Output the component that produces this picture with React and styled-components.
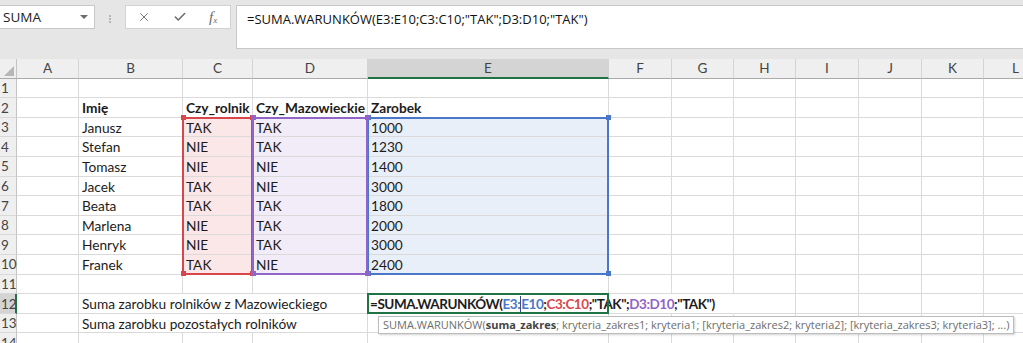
import React from 'react';
import styled, { createGlobalStyle } from 'styled-components';
import { X, Check } from 'lucide-react';

const COLS = ['A', 'B', 'C', 'D', 'E', 'F', 'G', 'H', 'I', 'J', 'K', 'L'];
const WIDTHS = [62, 104, 70, 115, 241, 63, 62, 62, 63, 63, 62, 64];
const ROW_HEADER = 17;
const HEAD_H = 19.7;
const ROW_H = 19.6;
const ROW_COUNT = 14;

const colLeft = (i) => ROW_HEADER + WIDTHS.slice(0, i).reduce((a, b) => a + b, 0);
const rowTop = (r) => HEAD_H + (r - 1) * ROW_H;

const RED = '#d8464b';
const PURPLE = '#9164c8';
const BLUE = '#4a78c8';
const GREEN = '#217346';

const TINTS = { C: '#fbe7e7', D: '#f1ecf7', E: '#e9eff9' };

const people = [
  ['Janusz', 'TAK', 'TAK', '1000'],
  ['Stefan', 'NIE', 'TAK', '1230'],
  ['Tomasz', 'NIE', 'NIE', '1400'],
  ['Jacek', 'TAK', 'NIE', '3000'],
  ['Beata', 'TAK', 'TAK', '1800'],
  ['Marlena', 'NIE', 'TAK', '2000'],
  ['Henryk', 'NIE', 'TAK', '3000'],
  ['Franek', 'TAK', 'NIE', '2400'],
];

const GlobalStyle = createGlobalStyle`
  html, body {
    margin: 0;
    padding: 0;
    background: #fff;
    overflow: hidden;
  }
`;

const Page = styled.div`
  width: 1023px;
  height: 343px;
  overflow: hidden;
  background: #fff;
`;

const FormulaBar = styled.div`
  display: flex;
  align-items: flex-start;
  height: 59px;
  box-sizing: border-box;
  padding-top: 5px;
  background: #e6e6e6;
  font-family: 'Open Sans', sans-serif;
`;

const NameBox = styled.div`
  width: 95px;
  height: 24px;
  box-sizing: border-box;
  display: flex;
  align-items: center;
  justify-content: space-between;
  padding: 0 6px 0 3px;
  background: #fff;
  border: 1px solid #c8c8c8;
  border-left: none;
  font-size: 13.5px;
  color: #222;
`;

const Caret = styled.span`
  width: 0;
  height: 0;
  border-left: 4px solid transparent;
  border-right: 4px solid transparent;
  border-top: 4px solid #6b6b6b;
`;

const Grip = styled.span`
  width: 2px;
  height: 2px;
  margin: 10px 14px 0 14px;
  background: #b4b4b4;
  box-shadow: 0 3px 0 #b4b4b4, 0 6px 0 #b4b4b4;
`;

const ActionBox = styled.div`
  width: 106px;
  height: 24px;
  box-sizing: border-box;
  display: flex;
  align-items: center;
  gap: 22px;
  padding-left: 11px;
  background: #fff;
  border: 1px solid #d2d2d2;
  color: #6b6b6b;
`;

const Fx = styled.span`
  font-family: 'Liberation Serif', serif;
  font-style: italic;
  font-size: 15px;
  color: #6b6b6b;
  line-height: 1;

  sub {
    font-size: 9px;
    vertical-align: -1px;
  }
`;

const FormulaInput = styled.div`
  flex: 1;
  height: 44px;
  margin-left: 5px;
  box-sizing: border-box;
  padding: 4px 10px;
  background: #fff;
  border: 1px solid #c8c8c8;
  border-right: none;
  font-size: 13px;
  line-height: 18px;
  color: #111;
  white-space: nowrap;
`;

const Sheet = styled.div`
  position: relative;
  display: grid;
  grid-template-columns: ${ROW_HEADER}px ${WIDTHS.map((w) => `${w}px`).join(' ')};
  grid-template-rows: ${HEAD_H}px;
  grid-auto-rows: ${ROW_H}px;
  font-family: Lato, 'Liberation Sans', sans-serif;
`;

const Corner = styled.div`
  position: relative;
  box-sizing: border-box;
  background: #efefef;
  border-right: 1px solid #c4c4c4;
  border-bottom: 1px solid #ababab;

  svg {
    position: absolute;
    right: 2px;
    bottom: 2px;
  }
`;

const ColHead = styled.div`
  box-sizing: border-box;
  display: flex;
  align-items: center;
  justify-content: center;
  background: ${(p) => (p.$active ? '#d4d4d4' : '#efefef')};
  border-right: 1px solid #d4d4d4;
  border-bottom: ${(p) => (p.$active ? `2px solid ${GREEN}` : '1px solid #ababab')};
  font-size: 13.5px;
  color: #444;
`;

const RowHead = styled.div`
  box-sizing: border-box;
  display: flex;
  align-items: center;
  padding-left: 1px;
  background: ${(p) => (p.$active ? '#d4d4d4' : '#efefef')};
  border-right: ${(p) => (p.$active ? `2px solid ${GREEN}` : '1px solid #c4c4c4')};
  border-bottom: 1px solid #d8d8d8;
  font-size: 13.5px;
  color: #444;
`;

const Cell = styled.div`
  grid-column: span ${(p) => p.$span || 1};
  box-sizing: border-box;
  padding: 1px 3px 0;
  background: ${(p) => p.$tint || '#fff'};
  border-right: 1px solid #dadada;
  border-bottom: 1px solid #dadada;
  font-size: 13.7px;
  font-weight: ${(p) => (p.$bold ? 700 : 400)};
  line-height: 18px;
  color: #1c1c1c;
  white-space: nowrap;
`;

const EditText = styled(Cell)`
  position: relative;
  z-index: 2;
  border-right-color: transparent;
  font-size: 13.5px;
  font-weight: 700;
  letter-spacing: -0.45px;
  padding-left: 2px;
`;

const Ref = styled.span`
  color: ${(p) => p.$color};
`;

const TextCursor = styled.span`
  display: inline-block;
  width: 1px;
  height: 16px;
  margin-right: 0;
  vertical-align: -3px;
  background: #2c4f8f;
`;

const RangeBox = styled.div`
  position: absolute;
  box-sizing: border-box;
  border: 2px solid ${(p) => p.$color};
  pointer-events: none;
  z-index: 1;
`;

const Handle = styled.span`
  position: absolute;
  width: 5px;
  height: 5px;
  background: ${(p) => p.$color};
  ${(p) => (p.$top ? 'top: -3.5px;' : 'bottom: -3.5px;')}
  ${(p) => (p.$left ? 'left: -3.5px;' : 'right: -3.5px;')}
`;

const EditFrame = styled.div`
  position: absolute;
  box-sizing: border-box;
  border: 2px solid ${GREEN};
  z-index: 3;
  pointer-events: none;
`;

const Tooltip = styled.div`
  position: absolute;
  z-index: 4;
  height: 18px;
  box-sizing: border-box;
  padding: 0 4px;
  background: #fff;
  border: 1px solid #bdbdbd;
  box-shadow: 1px 1px 2px rgba(0, 0, 0, 0.18);
  font-family: 'Open Sans', sans-serif;
  font-size: 11px;
  line-height: 16px;
  color: #6e6e6e;
  white-space: nowrap;

  b {
    color: #444;
  }
`;

const Range = ({ col, from, to, color }) => {
  const ci = COLS.indexOf(col);
  const style = {
    left: colLeft(ci) - 1,
    top: rowTop(from) - 1,
    width: WIDTHS[ci] + 1,
    height: (to - from + 1) * ROW_H + 1,
  };
  return (
    <RangeBox $color={color} style={style}>
      <Handle $color={color} $top $left />
      <Handle $color={color} $top />
      <Handle $color={color} $left />
      <Handle $color={color} />
    </RangeBox>
  );
};

const cellsFor = (r) => {
  if (r === 2) return { B: 'Imię', C: 'Czy_rolnik', D: 'Czy_Mazowieckie', E: 'Zarobek' };
  if (r >= 3 && r <= 10) {
    const [name, farmer, region, pay] = people[r - 3];
    return { B: name, C: farmer, D: region, E: pay };
  }
  if (r === 12) return { B: 'Suma zarobku rolników z Mazowieckiego' };
  if (r === 13) return { B: 'Suma zarobku pozostałych rolników' };
  return {};
};

const Formula = () => (
  <>
    =SUMA.WARUNKÓW(
    <Ref $color={BLUE}>E3:</Ref>
    <TextCursor />
    <Ref $color={BLUE}>E10</Ref>;
    <Ref $color={RED}>C3:C10</Ref>;"TAK";
    <Ref $color={PURPLE}>D3:D10</Ref>;"TAK")
  </>
);

const SheetRow = ({ r }) => {
  const values = cellsFor(r);
  const out = [
    <RowHead key="h" $active={r === 12}>{r}</RowHead>,
  ];
  let i = 0;
  while (i < COLS.length) {
    const col = COLS[i];
    if (r === 12 && col === 'E') {
      out.push(
        <EditText key={col} $span={3}>
          <Formula />
        </EditText>
      );
      i += 3;
      continue;
    }
    const span = (r === 12 || r === 13) && col === 'B' ? 3 : 1;
    const tint = r >= 3 && r <= 10 ? TINTS[col] : undefined;
    out.push(
      <Cell key={col} $span={span} $tint={tint} $bold={r === 2}>
        {values[col]}
      </Cell>
    );
    i += span;
  }
  return out;
};

export default function App() {
  const rows = Array.from({ length: ROW_COUNT }, (_, k) => k + 1);
  return (
    <Page>
      <GlobalStyle />
      <FormulaBar>
        <NameBox>
          SUMA
          <Caret />
        </NameBox>
        <Grip />
        <ActionBox>
          <X size={14} strokeWidth={1.6} />
          <Check size={14} strokeWidth={2.6} />
          <Fx>
            f<sub>x</sub>
          </Fx>
        </ActionBox>
        <FormulaInput>=SUMA.WARUNKÓW(E3:E10;C3:C10;"TAK";D3:D10;"TAK")</FormulaInput>
      </FormulaBar>

      <Sheet>
        <Corner>
          <svg width="10" height="10" viewBox="0 0 10 10">
            <polygon points="10,0 10,10 0,10" fill="#b7b7b7" />
          </svg>
        </Corner>
        {COLS.map((c) => (
          <ColHead key={c} $active={c === 'E'}>
            {c}
          </ColHead>
        ))}
        {rows.map((r) => (
          <SheetRow key={r} r={r} />
        ))}

        <Range col="E" from={3} to={10} color={BLUE} />
        <Range col="C" from={3} to={10} color={RED} />
        <Range col="D" from={3} to={10} color={PURPLE} />

        <EditFrame
          style={{
            left: colLeft(4) - 1,
            top: rowTop(12) - 1,
            width: WIDTHS[4] + 1,
            height: ROW_H + 1,
          }}
        />
        <Tooltip style={{ left: 378, top: rowTop(13) + 2 }}>
          SUMA.WARUNKÓW(<b>suma_zakres</b>; kryteria_zakres1; kryteria1; [kryteria_zakres2;
          kryteria2]; [kryteria_zakres3; kryteria3]; ...)
        </Tooltip>
      </Sheet>
    </Page>
  );
}
